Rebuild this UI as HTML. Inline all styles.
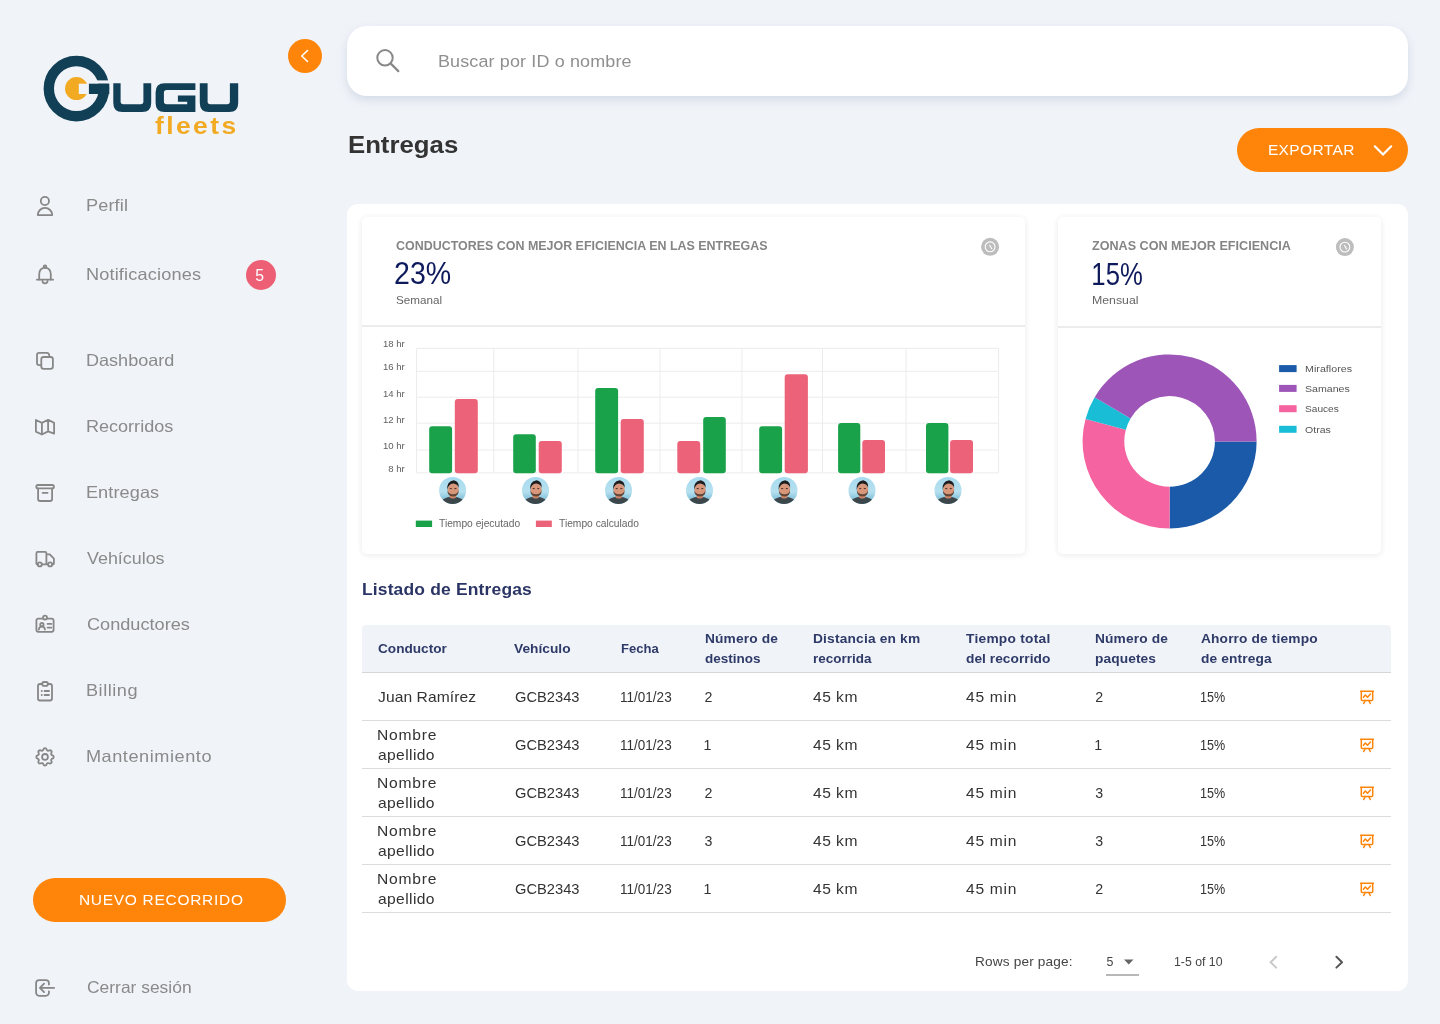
<!DOCTYPE html>
<html lang="es"><head><meta charset="utf-8"><title>Entregas</title>
<style>
html,body{margin:0;padding:0;}
body{width:1440px;height:1024px;position:relative;overflow:hidden;background:#f0f3f8;font-family:"Liberation Sans",sans-serif;}
.t{position:absolute;white-space:nowrap;}
.b{position:absolute;box-sizing:border-box;}
svg.ov{position:absolute;left:0;top:0;width:1440px;height:1024px;}
.tl{position:absolute;left:0;top:0;width:1440px;height:1024px;will-change:transform;}

</style></head><body>
<div class="b" style="left:288px;top:39px;width:34px;height:34px;border-radius:17px;background:#ff850a;"></div>
<div class="b" style="left:347px;top:26px;width:1061px;height:70px;border-radius:20px;background:#fff;box-shadow:0 4px 8px rgba(160,175,200,0.35);"></div>
<div class="b" style="left:1237px;top:128px;width:171px;height:44px;border-radius:22px;background:#ff850a;"></div>
<div class="b" style="left:33px;top:878px;width:253px;height:44px;border-radius:22px;background:#ff850a;"></div>
<div class="b" style="left:246px;top:260px;width:30px;height:30px;border-radius:15px;background:#ec5f75;"></div>
<div class="b" style="left:347px;top:204px;width:1061px;height:787px;border-radius:11px;background:#fff;"></div>
<div class="b" style="left:361.5px;top:216.7px;width:663.5px;height:337.3px;border-radius:5px;background:#fff;box-shadow:0 1px 6px rgba(0,0,0,0.09);"></div>
<div class="b" style="left:1057.7px;top:216.7px;width:323.3px;height:337.3px;border-radius:5px;background:#fff;box-shadow:0 1px 6px rgba(0,0,0,0.09);"></div>
<div class="b" style="left:361.5px;top:325px;width:663.5px;height:2px;background:#ececec;"></div>
<div class="b" style="left:1057.7px;top:325.5px;width:323.3px;height:2px;background:#ececec;"></div>
<div class="b" style="left:362px;top:625px;width:1028.6px;height:48px;border-radius:4px 4px 0 0;background:#f0f3f8;border-bottom:1px solid #d4d6da;"></div>
<div class="b" style="left:362px;top:720px;width:1028.6px;height:1px;background:#dcdcdc;"></div>
<div class="b" style="left:362px;top:768px;width:1028.6px;height:1px;background:#dcdcdc;"></div>
<div class="b" style="left:362px;top:816px;width:1028.6px;height:1px;background:#dcdcdc;"></div>
<div class="b" style="left:362px;top:864px;width:1028.6px;height:1px;background:#dcdcdc;"></div>
<div class="b" style="left:362px;top:912px;width:1028.6px;height:1px;background:#dcdcdc;"></div>
<div class="b" style="left:1106.4px;top:973.5px;width:32.2px;height:2px;background:#b8b8b8;"></div>

<svg class="ov" width="1440" height="1024" viewBox="0 0 1440 1024">
<circle cx="76.4" cy="88.6" r="27.6" fill="none" stroke="#113f56" stroke-width="10.4"/>
<rect x="94" y="80.4" width="18" height="3.3" fill="#f0f3f8"/>
<rect x="88.7" y="83.7" width="20.6" height="10.3" fill="#113f56"/>
<circle cx="76.5" cy="88.6" r="11.5" fill="#f2aa22"/>
<rect x="78.8" y="83.7" width="9.9" height="10.3" fill="#f0f3f8"/>
<path fill="#113f56" d="M113.3 83.3 H120.6 V101.5 Q120.6 104.2 123.3 104.2 H140.7 Q143.4 104.2 143.4 101.5 V83.3 H151.2 V102.9 Q151.2 111.9 142.2 111.9 H122.3 Q113.3 111.9 113.3 102.9 Z"/>
<path fill="#113f56" d="M195.4 83.3 V90.1 H166.6 Q163.9 90.1 163.9 92.8 V101.5 Q163.9 104.2 166.6 104.2 H187.2 V101.7 H177.9 V95.4 H195.4 V111.9 H164.6 Q155.6 111.9 155.6 102.9 V92.3 Q155.6 83.3 164.6 83.3 Z"/>
<path fill="#113f56" d="M199.8 83.3 H207.6 V101.5 Q207.6 104.2 210.3 104.2 H227.2 Q229.9 104.2 229.9 101.5 V83.3 H238.2 V102.9 Q238.2 111.9 229.2 111.9 H208.8 Q199.8 111.9 199.8 102.9 Z"/>
<path d="M307.5 50.5 L301.8 56 L307.5 61.5" fill="none" stroke="#fff" stroke-width="1.6" stroke-linecap="round" stroke-linejoin="round"/>
<circle cx="385" cy="57.8" r="7.7" fill="none" stroke="#888" stroke-width="2"/>
<path d="M390.6 63.4 L398.3 71.1" stroke="#888" stroke-width="2.2" stroke-linecap="round"/>
<path d="M1374.8 146.3 L1383 154.6 L1391.2 146.3" fill="none" stroke="#fff" stroke-width="2.2" stroke-linecap="round" stroke-linejoin="round"/>
<g fill="none" stroke="#878787" stroke-width="1.8" stroke-linecap="round" stroke-linejoin="round">
<circle cx="44.9" cy="201" r="4.1"/>
<path d="M37.8 215.1 A7.2 7.2 0 0 1 52.2 215.1 Z"/>
<path d="M39.2 279.6 V274.2 Q39.2 268.2 45 267.6 Q50.8 268.2 50.8 274.2 V279.6"/>
<path d="M36.9 279.7 H53.1"/>
<circle cx="45" cy="266.6" r="1.3"/>
<path d="M42.4 280.8 A2.6 2.6 0 0 0 47.6 280.8"/>
<path d="M49.2 356.4 V355 A2.1 2.1 0 0 0 47.1 352.9 H39.1 A2.1 2.1 0 0 0 37 355 V363 A2.1 2.1 0 0 0 39.1 365.1 H40.6"/>
<rect x="41.3" y="357" width="11.6" height="11.8" rx="2.3"/>
<path d="M35.9 420 L41.9 422.9 L48.1 419.8 L54.1 422.9 V433.6 L48.1 431.4 L41.9 434.5 L35.9 431.6 Z M41.9 422.9 V434.5 M48.1 419.8 V431.4"/>
<rect x="36.3" y="485" width="17.6" height="3.4" rx="1.7"/>
<path d="M38.1 488.6 V499 A2 2 0 0 0 40.1 501 H50.1 A2 2 0 0 0 52.1 499 V488.6"/>
<path d="M42.6 492.8 H47.6"/>
<path d="M37.8 564.3 H37.3 A0.9 0.9 0 0 1 36.4 563.4 V553.2 A1.4 1.4 0 0 1 37.8 551.8 H45 A1.4 1.4 0 0 1 46.4 553.2 V564.3 M41.8 564.3 H48.1 M52.1 564.3 H53 A0.9 0.9 0 0 0 53.9 563.4 V558.6 L49.8 554.4 H46.4"/>
<circle cx="39.8" cy="564.4" r="2"/>
<circle cx="50.1" cy="564.4" r="2"/>
<path d="M42.6 618.6 H38.4 A2 2 0 0 0 36.4 620.6 V629.8 A2 2 0 0 0 38.4 631.8 H51.6 A2 2 0 0 0 53.6 629.8 V620.6 A2 2 0 0 0 51.6 618.6 H47.3"/>
<circle cx="45" cy="617.6" r="2"/>
<circle cx="41.9" cy="624.6" r="1.7"/>
<path d="M38.9 629.6 A3 3 0 0 1 44.9 629.6"/>
<path d="M47.6 623.9 H51.4 M47.6 627.6 H51.4"/>
<path d="M42.1 684 H40 A2 2 0 0 0 38 686 V698.5 A2 2 0 0 0 40 700.5 H50 A2 2 0 0 0 52 698.5 V686 A2 2 0 0 0 50 684 H48"/>
<rect x="42.2" y="682" width="5.7" height="3.8" rx="1.9"/>
<path d="M41.7 691 H41.8 M44.6 691 H49 M41.7 695 H41.8 M44.6 695 H49"/>
<path d="M48.9 984.5 V983.1 A3 3 0 0 0 45.9 980.1 H39.1 A3 3 0 0 0 36.1 983.1 V992.8 A3 3 0 0 0 39.1 995.8 H45.9 A3 3 0 0 0 48.9 992.8 V991.3"/>
<path d="M54.1 987.9 H40.2 M44.1 983.7 L39.9 987.9 L44.1 992.1"/>
</g>
<g transform="translate(33.4 745.3) scale(0.967)" fill="none" stroke="#878787" stroke-width="1.86" stroke-linecap="round" stroke-linejoin="round"><path d="M10.325 4.317c.426 -1.756 2.924 -1.756 3.35 0a1.724 1.724 0 0 0 2.573 1.066c1.543 -.94 3.31 .826 2.37 2.37a1.724 1.724 0 0 0 1.065 2.572c1.756 .426 1.756 2.924 0 3.35a1.724 1.724 0 0 0 -1.066 2.573c.94 1.543 -.826 3.31 -2.37 2.37a1.724 1.724 0 0 0 -2.572 1.065c-.426 1.756 -2.924 1.756 -3.35 0a1.724 1.724 0 0 0 -2.573 -1.066c-1.543 .94 -3.31 -.826 -2.37 -2.37a1.724 1.724 0 0 0 -1.065 -2.572c-1.756 -.426 -1.756 -2.924 0 -3.35a1.724 1.724 0 0 0 1.066 -2.573c-.94 -1.543 .826 -3.31 2.37 -2.37c1 .608 2.296 .07 2.572 -1.065z"/><circle cx="12" cy="12" r="3"/></g>
<line x1="416.6" y1="348.3" x2="998.6" y2="348.3" stroke="#ececec" stroke-width="1"/>
<line x1="416.6" y1="371.25" x2="998.6" y2="371.25" stroke="#ececec" stroke-width="1"/>
<line x1="416.6" y1="397.2" x2="998.6" y2="397.2" stroke="#ececec" stroke-width="1"/>
<line x1="416.6" y1="423.2" x2="998.6" y2="423.2" stroke="#ececec" stroke-width="1"/>
<line x1="416.6" y1="450" x2="998.6" y2="450" stroke="#ececec" stroke-width="1"/>
<line x1="416.6" y1="472.9" x2="998.6" y2="472.9" stroke="#ececec" stroke-width="1"/>
<line x1="416.6" y1="348.3" x2="416.6" y2="472.9" stroke="#ececec" stroke-width="1"/>
<line x1="493.8" y1="348.3" x2="493.8" y2="472.9" stroke="#ececec" stroke-width="1"/>
<line x1="578" y1="348.3" x2="578" y2="472.9" stroke="#ececec" stroke-width="1"/>
<line x1="660.1" y1="348.3" x2="660.1" y2="472.9" stroke="#ececec" stroke-width="1"/>
<line x1="741.9" y1="348.3" x2="741.9" y2="472.9" stroke="#ececec" stroke-width="1"/>
<line x1="822.5" y1="348.3" x2="822.5" y2="472.9" stroke="#ececec" stroke-width="1"/>
<line x1="906.1" y1="348.3" x2="906.1" y2="472.9" stroke="#ececec" stroke-width="1"/>
<line x1="998.6" y1="348.3" x2="998.6" y2="472.9" stroke="#ececec" stroke-width="1"/>
<rect x="429.2" y="426.3" width="22.9" height="47.0" rx="3" fill="#1aa24b"/>
<rect x="454.8" y="399.1" width="23.0" height="74.2" rx="3" fill="#ec6278"/>
<rect x="513.2" y="434.2" width="22.6" height="39.1" rx="3" fill="#1aa24b"/>
<rect x="538.7" y="441" width="23.1" height="32.3" rx="3" fill="#ec6278"/>
<rect x="595.2" y="388" width="22.9" height="85.3" rx="3" fill="#1aa24b"/>
<rect x="620.7" y="419.1" width="23.1" height="54.2" rx="3" fill="#ec6278"/>
<rect x="677.3" y="441" width="22.9" height="32.3" rx="3" fill="#ec6278"/>
<rect x="703.2" y="417.1" width="22.6" height="56.2" rx="3" fill="#1aa24b"/>
<rect x="759.2" y="426.3" width="22.9" height="47.0" rx="3" fill="#1aa24b"/>
<rect x="784.7" y="374.3" width="23.2" height="99.0" rx="3" fill="#ec6278"/>
<rect x="838.1" y="422.9" width="22.2" height="50.4" rx="3" fill="#1aa24b"/>
<rect x="862.3" y="440" width="22.7" height="33.3" rx="3" fill="#ec6278"/>
<rect x="926" y="422.9" width="22.4" height="50.4" rx="3" fill="#1aa24b"/>
<rect x="950.1" y="440" width="22.9" height="33.3" rx="3" fill="#ec6278"/>
<rect x="415.8" y="520.6" width="16.3" height="6.4" fill="#1aa24b"/>
<rect x="535.9" y="520.6" width="15.9" height="6.4" fill="#ec6278"/>
<defs><linearGradient id="sky" x1="0" y1="0" x2="0" y2="1"><stop offset="0" stop-color="#a6dbef"/><stop offset="0.55" stop-color="#b6e0ef"/><stop offset="0.75" stop-color="#8fc9e0"/><stop offset="1" stop-color="#9ccfe4"/></linearGradient></defs>
<clipPath id="av452"><circle cx="452.6" cy="490.4" r="13.5"/></clipPath>
<g clip-path="url(#av452)"><rect x="438.6" y="476.4" width="28" height="28" fill="url(#sky)"/><ellipse cx="452.6" cy="504.9" rx="13" ry="8.2" fill="#3c474c"/><rect x="449.6" y="492.9" width="6.5" height="5.5" rx="2" fill="#c98466"/><ellipse cx="453.20000000000005" cy="489.79999999999995" rx="5.6" ry="6.6" fill="#d8977a"/><path d="M447.40000000000003 489.9 Q447.1 495.9 453.20000000000005 496.4 Q459.1 495.9 458.6 489.9 Q457.6 494.2 453.20000000000005 494.2 Q448.6 494.2 447.40000000000003 489.9 Z" fill="#3a2a22" opacity="0.75"/><path d="M447.20000000000005 489.9 Q446.40000000000003 481.4 453.8 480.2 Q459.40000000000003 481.4 458.70000000000005 487.9 Q457.6 483.9 453.20000000000005 483.59999999999997 Q448.6 483.9 447.20000000000005 489.9 Z" fill="#1f1d1e"/><path d="M449.8 488.59999999999997 H451.8 M454.40000000000003 488.59999999999997 H456.40000000000003" stroke="#3a2520" stroke-width="0.9"/></g>
<clipPath id="av535"><circle cx="535.5" cy="490.4" r="13.5"/></clipPath>
<g clip-path="url(#av535)"><rect x="521.5" y="476.4" width="28" height="28" fill="url(#sky)"/><ellipse cx="535.5" cy="504.9" rx="13" ry="8.2" fill="#3c474c"/><rect x="532.5" y="492.9" width="6.5" height="5.5" rx="2" fill="#c98466"/><ellipse cx="536.1" cy="489.79999999999995" rx="5.6" ry="6.6" fill="#d8977a"/><path d="M530.3 489.9 Q530.0 495.9 536.1 496.4 Q542.0 495.9 541.5 489.9 Q540.5 494.2 536.1 494.2 Q531.5 494.2 530.3 489.9 Z" fill="#3a2a22" opacity="0.75"/><path d="M530.1 489.9 Q529.3 481.4 536.7 480.2 Q542.3 481.4 541.6 487.9 Q540.5 483.9 536.1 483.59999999999997 Q531.5 483.9 530.1 489.9 Z" fill="#1f1d1e"/><path d="M532.7 488.59999999999997 H534.7 M537.3 488.59999999999997 H539.3" stroke="#3a2520" stroke-width="0.9"/></g>
<clipPath id="av618"><circle cx="618.5" cy="490.4" r="13.5"/></clipPath>
<g clip-path="url(#av618)"><rect x="604.5" y="476.4" width="28" height="28" fill="url(#sky)"/><ellipse cx="618.5" cy="504.9" rx="13" ry="8.2" fill="#3c474c"/><rect x="615.5" y="492.9" width="6.5" height="5.5" rx="2" fill="#c98466"/><ellipse cx="619.1" cy="489.79999999999995" rx="5.6" ry="6.6" fill="#d8977a"/><path d="M613.3 489.9 Q613.0 495.9 619.1 496.4 Q625.0 495.9 624.5 489.9 Q623.5 494.2 619.1 494.2 Q614.5 494.2 613.3 489.9 Z" fill="#3a2a22" opacity="0.75"/><path d="M613.1 489.9 Q612.3 481.4 619.7 480.2 Q625.3 481.4 624.6 487.9 Q623.5 483.9 619.1 483.59999999999997 Q614.5 483.9 613.1 489.9 Z" fill="#1f1d1e"/><path d="M615.7 488.59999999999997 H617.7 M620.3 488.59999999999997 H622.3" stroke="#3a2520" stroke-width="0.9"/></g>
<clipPath id="av699"><circle cx="699.5" cy="490.4" r="13.5"/></clipPath>
<g clip-path="url(#av699)"><rect x="685.5" y="476.4" width="28" height="28" fill="url(#sky)"/><ellipse cx="699.5" cy="504.9" rx="13" ry="8.2" fill="#3c474c"/><rect x="696.5" y="492.9" width="6.5" height="5.5" rx="2" fill="#c98466"/><ellipse cx="700.1" cy="489.79999999999995" rx="5.6" ry="6.6" fill="#d8977a"/><path d="M694.3 489.9 Q694.0 495.9 700.1 496.4 Q706.0 495.9 705.5 489.9 Q704.5 494.2 700.1 494.2 Q695.5 494.2 694.3 489.9 Z" fill="#3a2a22" opacity="0.75"/><path d="M694.1 489.9 Q693.3 481.4 700.7 480.2 Q706.3 481.4 705.6 487.9 Q704.5 483.9 700.1 483.59999999999997 Q695.5 483.9 694.1 489.9 Z" fill="#1f1d1e"/><path d="M696.7 488.59999999999997 H698.7 M701.3 488.59999999999997 H703.3" stroke="#3a2520" stroke-width="0.9"/></g>
<clipPath id="av784"><circle cx="784" cy="490.4" r="13.5"/></clipPath>
<g clip-path="url(#av784)"><rect x="770" y="476.4" width="28" height="28" fill="url(#sky)"/><ellipse cx="784" cy="504.9" rx="13" ry="8.2" fill="#3c474c"/><rect x="781" y="492.9" width="6.5" height="5.5" rx="2" fill="#c98466"/><ellipse cx="784.6" cy="489.79999999999995" rx="5.6" ry="6.6" fill="#d8977a"/><path d="M778.8 489.9 Q778.5 495.9 784.6 496.4 Q790.5 495.9 790 489.9 Q789 494.2 784.6 494.2 Q780 494.2 778.8 489.9 Z" fill="#3a2a22" opacity="0.75"/><path d="M778.6 489.9 Q777.8 481.4 785.2 480.2 Q790.8 481.4 790.1 487.9 Q789 483.9 784.6 483.59999999999997 Q780 483.9 778.6 489.9 Z" fill="#1f1d1e"/><path d="M781.2 488.59999999999997 H783.2 M785.8 488.59999999999997 H787.8" stroke="#3a2520" stroke-width="0.9"/></g>
<clipPath id="av862"><circle cx="862" cy="490.4" r="13.5"/></clipPath>
<g clip-path="url(#av862)"><rect x="848" y="476.4" width="28" height="28" fill="url(#sky)"/><ellipse cx="862" cy="504.9" rx="13" ry="8.2" fill="#3c474c"/><rect x="859" y="492.9" width="6.5" height="5.5" rx="2" fill="#c98466"/><ellipse cx="862.6" cy="489.79999999999995" rx="5.6" ry="6.6" fill="#d8977a"/><path d="M856.8 489.9 Q856.5 495.9 862.6 496.4 Q868.5 495.9 868 489.9 Q867 494.2 862.6 494.2 Q858 494.2 856.8 489.9 Z" fill="#3a2a22" opacity="0.75"/><path d="M856.6 489.9 Q855.8 481.4 863.2 480.2 Q868.8 481.4 868.1 487.9 Q867 483.9 862.6 483.59999999999997 Q858 483.9 856.6 489.9 Z" fill="#1f1d1e"/><path d="M859.2 488.59999999999997 H861.2 M863.8 488.59999999999997 H865.8" stroke="#3a2520" stroke-width="0.9"/></g>
<clipPath id="av948"><circle cx="948" cy="490.4" r="13.5"/></clipPath>
<g clip-path="url(#av948)"><rect x="934" y="476.4" width="28" height="28" fill="url(#sky)"/><ellipse cx="948" cy="504.9" rx="13" ry="8.2" fill="#3c474c"/><rect x="945" y="492.9" width="6.5" height="5.5" rx="2" fill="#c98466"/><ellipse cx="948.6" cy="489.79999999999995" rx="5.6" ry="6.6" fill="#d8977a"/><path d="M942.8 489.9 Q942.5 495.9 948.6 496.4 Q954.5 495.9 954 489.9 Q953 494.2 948.6 494.2 Q944 494.2 942.8 489.9 Z" fill="#3a2a22" opacity="0.75"/><path d="M942.6 489.9 Q941.8 481.4 949.2 480.2 Q954.8 481.4 954.1 487.9 Q953 483.9 948.6 483.59999999999997 Q944 483.9 942.6 489.9 Z" fill="#1f1d1e"/><path d="M945.2 488.59999999999997 H947.2 M949.8 488.59999999999997 H951.8" stroke="#3a2520" stroke-width="0.9"/></g>
<circle cx="990.1" cy="246.8" r="9" fill="#bdbdbd"/>
<circle cx="990.1" cy="246.8" r="4.9" fill="none" stroke="#fff" stroke-width="1.1"/>
<path d="M989.7 245.20000000000002 L991.8000000000001 248.70000000000002" fill="none" stroke="#fff" stroke-width="1.1" stroke-linecap="round"/>
<circle cx="1344.9" cy="247.1" r="9" fill="#bdbdbd"/>
<circle cx="1344.9" cy="247.1" r="4.9" fill="none" stroke="#fff" stroke-width="1.1"/>
<path d="M1344.5 245.5 L1346.6000000000001 249.0" fill="none" stroke="#fff" stroke-width="1.1" stroke-linecap="round"/>
<path d="M1256.60 441.40 A87 87 0 0 1 1169.60 528.40 L1169.60 486.70 A45.3 45.3 0 0 0 1214.90 441.40 Z" fill="#1a5aa9"/>
<path d="M1169.60 528.40 A87 87 0 0 1 1085.56 418.88 L1125.84 429.68 A45.3 45.3 0 0 0 1169.60 486.70 Z" fill="#f564a0"/>
<path d="M1085.56 418.88 A87 87 0 0 1 1094.64 397.24 L1130.57 418.41 A45.3 45.3 0 0 0 1125.84 429.68 Z" fill="#19bed6"/>
<path d="M1094.64 397.24 A87 87 0 0 1 1256.60 441.40 L1214.90 441.40 A45.3 45.3 0 0 0 1130.57 418.41 Z" fill="#9d55b8"/>
<rect x="1279.1" y="365.1" width="17.5" height="7" fill="#1a5aa9"/>
<rect x="1279.1" y="384.9" width="17.5" height="7" fill="#9d55b8"/>
<rect x="1279.1" y="405.2" width="17.5" height="7" fill="#f564a0"/>
<rect x="1279.1" y="425.8" width="17.5" height="7" fill="#19bed6"/>
<g transform="translate(0 0)" fill="none" stroke="#ff8508" stroke-width="1.5" stroke-linecap="round" stroke-linejoin="round"><path d="M1360.6 691.2 H1373.4"/><path d="M1361.3 691.5 V699.4 A1 1 0 0 0 1362.3 700.4 H1371.7 A1 1 0 0 0 1372.7 699.4 V691.5"/><path d="M1365.2 700.6 L1363.7 703.5 M1368.8 700.6 L1370.3 703.5"/><path d="M1363.4 697.3 L1365.4 695 L1367.5 697.3 L1370.5 694.1"/></g>
<g transform="translate(0 48)" fill="none" stroke="#ff8508" stroke-width="1.5" stroke-linecap="round" stroke-linejoin="round"><path d="M1360.6 691.2 H1373.4"/><path d="M1361.3 691.5 V699.4 A1 1 0 0 0 1362.3 700.4 H1371.7 A1 1 0 0 0 1372.7 699.4 V691.5"/><path d="M1365.2 700.6 L1363.7 703.5 M1368.8 700.6 L1370.3 703.5"/><path d="M1363.4 697.3 L1365.4 695 L1367.5 697.3 L1370.5 694.1"/></g>
<g transform="translate(0 96)" fill="none" stroke="#ff8508" stroke-width="1.5" stroke-linecap="round" stroke-linejoin="round"><path d="M1360.6 691.2 H1373.4"/><path d="M1361.3 691.5 V699.4 A1 1 0 0 0 1362.3 700.4 H1371.7 A1 1 0 0 0 1372.7 699.4 V691.5"/><path d="M1365.2 700.6 L1363.7 703.5 M1368.8 700.6 L1370.3 703.5"/><path d="M1363.4 697.3 L1365.4 695 L1367.5 697.3 L1370.5 694.1"/></g>
<g transform="translate(0 144)" fill="none" stroke="#ff8508" stroke-width="1.5" stroke-linecap="round" stroke-linejoin="round"><path d="M1360.6 691.2 H1373.4"/><path d="M1361.3 691.5 V699.4 A1 1 0 0 0 1362.3 700.4 H1371.7 A1 1 0 0 0 1372.7 699.4 V691.5"/><path d="M1365.2 700.6 L1363.7 703.5 M1368.8 700.6 L1370.3 703.5"/><path d="M1363.4 697.3 L1365.4 695 L1367.5 697.3 L1370.5 694.1"/></g>
<g transform="translate(0 192)" fill="none" stroke="#ff8508" stroke-width="1.5" stroke-linecap="round" stroke-linejoin="round"><path d="M1360.6 691.2 H1373.4"/><path d="M1361.3 691.5 V699.4 A1 1 0 0 0 1362.3 700.4 H1371.7 A1 1 0 0 0 1372.7 699.4 V691.5"/><path d="M1365.2 700.6 L1363.7 703.5 M1368.8 700.6 L1370.3 703.5"/><path d="M1363.4 697.3 L1365.4 695 L1367.5 697.3 L1370.5 694.1"/></g>
<path d="M1124 959.5 H1133.5 L1128.75 964.5 Z" fill="#666"/>
<path d="M1276.2 956.8 L1270.6 962.2 L1276.2 967.6" fill="none" stroke="#c9c9c9" stroke-width="2" stroke-linecap="round" stroke-linejoin="round"/>
<path d="M1336.4 956.8 L1342 962.2 L1336.4 967.6" fill="none" stroke="#555" stroke-width="2" stroke-linecap="round" stroke-linejoin="round"/>
</svg>
<div class="tl"><div class="t" id="t0" style="top:197.00px;font-size:16.50px;line-height:16.50px;color:#8a8a8a;left:86.30px;letter-spacing:0.142px;transform:scaleX(1.1000);transform-origin:1.00px 0;">Perfil</div>
<div class="t" id="t1" style="top:266.00px;font-size:16.50px;line-height:16.50px;color:#8a8a8a;left:86.30px;letter-spacing:0.153px;transform:scaleX(1.1000);transform-origin:1.00px 0;">Notificaciones</div>
<div class="t" id="t2" style="top:352.00px;font-size:16.50px;line-height:16.50px;color:#8a8a8a;left:86.10px;transform:scaleX(1.0963);transform-origin:1.00px 0;">Dashboard</div>
<div class="t" id="t3" style="top:418.00px;font-size:16.50px;line-height:16.50px;color:#8a8a8a;left:86.10px;transform:scaleX(1.0952);transform-origin:1.00px 0;">Recorridos</div>
<div class="t" id="t4" style="top:484.00px;font-size:16.50px;line-height:16.50px;color:#8a8a8a;left:86.10px;letter-spacing:0.082px;transform:scaleX(1.1000);transform-origin:1.00px 0;">Entregas</div>
<div class="t" id="t5" style="top:550.00px;font-size:16.50px;line-height:16.50px;color:#8a8a8a;left:87.10px;transform:scaleX(1.0841);transform-origin:0.00px 0;">Vehículos</div>
<div class="t" id="t6" style="top:616.00px;font-size:16.50px;line-height:16.50px;color:#8a8a8a;left:87.10px;transform:scaleX(1.0996);transform-origin:0.00px 0;">Conductores</div>
<div class="t" id="t7" style="top:682.00px;font-size:16.50px;line-height:16.50px;color:#8a8a8a;left:86.10px;letter-spacing:0.496px;transform:scaleX(1.1000);transform-origin:1.00px 0;">Billing</div>
<div class="t" id="t8" style="top:748.00px;font-size:16.50px;line-height:16.50px;color:#8a8a8a;left:86.10px;letter-spacing:0.496px;transform:scaleX(1.1000);transform-origin:1.00px 0;">Mantenimiento</div>
<div class="t" id="t9" style="top:979.00px;font-size:16.50px;line-height:16.50px;color:#8a8a8a;left:86.70px;transform:scaleX(1.0561);transform-origin:0.00px 0;">Cerrar sesión</div>
<div class="t" id="t10" style="top:893.00px;font-size:14.10px;line-height:14.10px;color:#fff;left:78.75px;letter-spacing:0.641px;transform:scaleX(1.1000);transform-origin:1.00px 0;">NUEVO RECORRIDO</div>
<div class="t" id="t11" style="top:268.00px;font-size:15.80px;line-height:15.80px;color:#fff;left:255.30px;">5</div>
<div class="t" id="t12" style="top:114.00px;font-size:24.00px;line-height:24.00px;color:#f2aa22;font-weight:700;left:154.60px;letter-spacing:2.203px;transform:scaleX(1.1000);transform-origin:0.00px 0;">fleets</div>
<div class="t" id="t13" style="top:53.00px;font-size:16.35px;line-height:16.35px;color:#8f8f8f;left:437.50px;letter-spacing:0.123px;transform:scaleX(1.1000);transform-origin:1.00px 0;">Buscar por ID o nombre</div>
<div class="t" id="t14" style="top:133.00px;font-size:24.20px;line-height:24.20px;color:#333;font-weight:700;left:347.75px;transform:scaleX(1.0656);transform-origin:1.00px 0;">Entregas</div>
<div class="t" id="t15" style="top:143.00px;font-size:14.10px;line-height:14.10px;color:#fff;left:1267.90px;letter-spacing:0.343px;transform:scaleX(1.1000);transform-origin:1.00px 0;">EXPORTAR</div>
<div class="t" id="t16" style="top:240.00px;font-size:12.50px;line-height:12.50px;color:#858585;font-weight:700;left:396.40px;transform:scaleX(0.9960);transform-origin:0.00px 0;">CONDUCTORES CON MEJOR EFICIENCIA EN LAS ENTREGAS</div>
<div class="t" id="t17" style="top:258.00px;font-size:31.00px;line-height:31.00px;color:#0e1a5c;left:394.00px;transform:scaleX(0.9209);transform-origin:1.00px 0;">23%</div>
<div class="t" id="t18" style="top:295.00px;font-size:11.30px;line-height:11.30px;color:#666;left:396.40px;transform:scaleX(1.0323);transform-origin:0.00px 0;">Semanal</div>
<div class="t" id="t19" style="top:339.00px;font-size:9.60px;line-height:9.60px;color:#5f5f5f;right:1035.2px;">18 hr</div>
<div class="t" id="t20" style="top:362.00px;font-size:9.60px;line-height:9.60px;color:#5f5f5f;right:1035.2px;">16 hr</div>
<div class="t" id="t21" style="top:389.00px;font-size:9.60px;line-height:9.60px;color:#5f5f5f;right:1035.2px;">14 hr</div>
<div class="t" id="t22" style="top:415.00px;font-size:9.60px;line-height:9.60px;color:#5f5f5f;right:1035.2px;">12 hr</div>
<div class="t" id="t23" style="top:441.00px;font-size:9.60px;line-height:9.60px;color:#5f5f5f;right:1035.2px;">10 hr</div>
<div class="t" id="t24" style="top:464.00px;font-size:9.60px;line-height:9.60px;color:#5f5f5f;right:1035.2px;">8 hr</div>
<div class="t" id="t25" style="top:519.00px;font-size:10.00px;line-height:10.00px;color:#666;left:439.10px;transform:scaleX(1.0256);transform-origin:0.00px 0;">Tiempo ejecutado</div>
<div class="t" id="t26" style="top:519.00px;font-size:10.00px;line-height:10.00px;color:#666;left:558.80px;transform:scaleX(1.0250);transform-origin:0.00px 0;">Tiempo calculado</div>
<div class="t" id="t27" style="top:240.00px;font-size:12.50px;line-height:12.50px;color:#858585;font-weight:700;left:1092.20px;transform:scaleX(1.0081);transform-origin:0.00px 0;">ZONAS CON MEJOR EFICIENCIA</div>
<div class="t" id="t28" style="top:259.00px;font-size:31.00px;line-height:31.00px;color:#0e1a5c;left:1090.70px;transform:scaleX(0.8288);transform-origin:2.00px 0;">15%</div>
<div class="t" id="t29" style="top:295.00px;font-size:11.30px;line-height:11.30px;color:#666;left:1092.20px;transform:scaleX(1.0903);transform-origin:0.00px 0;">Mensual</div>
<div class="t" id="t30" style="top:364.00px;font-size:9.70px;line-height:9.70px;color:#555;left:1304.60px;letter-spacing:0.035px;transform:scaleX(1.1000);transform-origin:0.00px 0;">Miraflores</div>
<div class="t" id="t31" style="top:384.00px;font-size:9.70px;line-height:9.70px;color:#555;left:1304.60px;transform:scaleX(1.0954);transform-origin:0.00px 0;">Samanes</div>
<div class="t" id="t32" style="top:404.00px;font-size:9.70px;line-height:9.70px;color:#555;left:1304.60px;transform:scaleX(1.0472);transform-origin:0.00px 0;">Sauces</div>
<div class="t" id="t33" style="top:425.00px;font-size:9.70px;line-height:9.70px;color:#555;left:1304.60px;transform:scaleX(1.0906);transform-origin:0.00px 0;">Otras</div>
<div class="t" id="t34" style="top:582.00px;font-size:15.90px;line-height:15.90px;color:#2b3565;font-weight:700;left:361.60px;letter-spacing:0.144px;transform:scaleX(1.1000);transform-origin:1.00px 0;">Listado de Entregas</div>
<div class="t" id="t35" style="top:643.00px;font-size:12.50px;line-height:12.50px;color:#2e3a68;font-weight:700;left:378.20px;transform:scaleX(1.0897);transform-origin:0.00px 0;">Conductor</div>
<div class="t" id="t36" style="top:643.00px;font-size:12.50px;line-height:12.50px;color:#2e3a68;font-weight:700;left:514.30px;letter-spacing:0.007px;transform:scaleX(1.1000);transform-origin:0.00px 0;">Vehículo</div>
<div class="t" id="t37" style="top:643.00px;font-size:12.50px;line-height:12.50px;color:#2e3a68;font-weight:700;left:620.50px;transform:scaleX(1.0424);transform-origin:0.00px 0;">Fecha</div>
<div class="t" id="t38" style="top:633.00px;font-size:12.50px;line-height:12.50px;color:#2e3a68;font-weight:700;left:704.50px;letter-spacing:0.128px;transform:scaleX(1.1000);transform-origin:0.00px 0;">Número de</div>
<div class="t" id="t39" style="top:653.00px;font-size:12.50px;line-height:12.50px;color:#2e3a68;font-weight:700;left:704.50px;transform:scaleX(1.0788);transform-origin:0.00px 0;">destinos</div>
<div class="t" id="t40" style="top:633.00px;font-size:12.50px;line-height:12.50px;color:#2e3a68;font-weight:700;left:812.50px;letter-spacing:0.158px;transform:scaleX(1.1000);transform-origin:0.00px 0;">Distancia en km</div>
<div class="t" id="t41" style="top:653.00px;font-size:12.50px;line-height:12.50px;color:#2e3a68;font-weight:700;left:812.50px;transform:scaleX(1.0771);transform-origin:0.00px 0;">recorrida</div>
<div class="t" id="t42" style="top:633.00px;font-size:12.50px;line-height:12.50px;color:#2e3a68;font-weight:700;left:966.25px;letter-spacing:0.230px;transform:scaleX(1.1000);transform-origin:0.00px 0;">Tiempo total</div>
<div class="t" id="t43" style="top:653.00px;font-size:12.50px;line-height:12.50px;color:#2e3a68;font-weight:700;left:966.25px;letter-spacing:0.019px;transform:scaleX(1.1000);transform-origin:0.00px 0;">del recorrido</div>
<div class="t" id="t44" style="top:633.00px;font-size:12.50px;line-height:12.50px;color:#2e3a68;font-weight:700;left:1095.30px;letter-spacing:0.117px;transform:scaleX(1.1000);transform-origin:0.00px 0;">Número de</div>
<div class="t" id="t45" style="top:653.00px;font-size:12.50px;line-height:12.50px;color:#2e3a68;font-weight:700;left:1095.30px;letter-spacing:0.076px;transform:scaleX(1.1000);transform-origin:0.00px 0;">paquetes</div>
<div class="t" id="t46" style="top:633.00px;font-size:12.50px;line-height:12.50px;color:#2e3a68;font-weight:700;left:1201.00px;letter-spacing:0.122px;transform:scaleX(1.1000);transform-origin:0.00px 0;">Ahorro de tiempo</div>
<div class="t" id="t47" style="top:653.00px;font-size:12.50px;line-height:12.50px;color:#2e3a68;font-weight:700;left:1201.00px;letter-spacing:0.112px;transform:scaleX(1.1000);transform-origin:0.00px 0;">de entrega</div>
<div class="t" id="t48" style="top:690.00px;font-size:14.20px;line-height:14.20px;color:#333;left:378.20px;letter-spacing:0.079px;transform:scaleX(1.1000);transform-origin:0.00px 0;">Juan Ramírez</div>
<div class="t" id="t49" style="top:690.00px;font-size:14.20px;line-height:14.20px;color:#333;left:514.50px;transform:scaleX(1.0350);transform-origin:0.00px 0;">GCB2343</div>
<div class="t" id="t50" style="top:690.00px;font-size:14.20px;line-height:14.20px;color:#333;left:619.50px;transform:scaleX(0.9525);transform-origin:1.00px 0;">11/01/23</div>
<div class="t" id="t51" style="top:690.00px;font-size:14.20px;line-height:14.20px;color:#333;left:704.50px;">2</div>
<div class="t" id="t52" style="top:690.00px;font-size:14.20px;line-height:14.20px;color:#333;left:812.50px;letter-spacing:0.432px;transform:scaleX(1.1000);transform-origin:0.00px 0;">45 km</div>
<div class="t" id="t53" style="top:690.00px;font-size:14.20px;line-height:14.20px;color:#333;left:966.25px;letter-spacing:0.643px;transform:scaleX(1.1000);transform-origin:0.00px 0;">45 min</div>
<div class="t" id="t54" style="top:690.00px;font-size:14.20px;line-height:14.20px;color:#333;left:1095.30px;">2</div>
<div class="t" id="t55" style="top:690.00px;font-size:14.20px;line-height:14.20px;color:#333;left:1200.00px;transform:scaleX(0.8855);transform-origin:1.00px 0;">15%</div>
<div class="t" id="t56" style="top:728.00px;font-size:14.20px;line-height:14.20px;color:#333;left:377.40px;letter-spacing:0.741px;transform:scaleX(1.1000);transform-origin:1.00px 0;">Nombre</div>
<div class="t" id="t57" style="top:748.00px;font-size:14.20px;line-height:14.20px;color:#333;left:378.40px;letter-spacing:0.348px;transform:scaleX(1.1000);transform-origin:0.00px 0;">apellido</div>
<div class="t" id="t58" style="top:738.00px;font-size:14.20px;line-height:14.20px;color:#333;left:514.50px;transform:scaleX(1.0350);transform-origin:0.00px 0;">GCB2343</div>
<div class="t" id="t59" style="top:738.00px;font-size:14.20px;line-height:14.20px;color:#333;left:619.50px;transform:scaleX(0.9525);transform-origin:1.00px 0;">11/01/23</div>
<div class="t" id="t60" style="top:738.00px;font-size:14.20px;line-height:14.20px;color:#333;left:703.50px;">1</div>
<div class="t" id="t61" style="top:738.00px;font-size:14.20px;line-height:14.20px;color:#333;left:812.50px;letter-spacing:0.432px;transform:scaleX(1.1000);transform-origin:0.00px 0;">45 km</div>
<div class="t" id="t62" style="top:738.00px;font-size:14.20px;line-height:14.20px;color:#333;left:966.25px;letter-spacing:0.643px;transform:scaleX(1.1000);transform-origin:0.00px 0;">45 min</div>
<div class="t" id="t63" style="top:738.00px;font-size:14.20px;line-height:14.20px;color:#333;left:1094.30px;">1</div>
<div class="t" id="t64" style="top:738.00px;font-size:14.20px;line-height:14.20px;color:#333;left:1200.00px;transform:scaleX(0.8855);transform-origin:1.00px 0;">15%</div>
<div class="t" id="t65" style="top:776.00px;font-size:14.20px;line-height:14.20px;color:#333;left:377.40px;letter-spacing:0.741px;transform:scaleX(1.1000);transform-origin:1.00px 0;">Nombre</div>
<div class="t" id="t66" style="top:796.00px;font-size:14.20px;line-height:14.20px;color:#333;left:378.40px;letter-spacing:0.348px;transform:scaleX(1.1000);transform-origin:0.00px 0;">apellido</div>
<div class="t" id="t67" style="top:786.00px;font-size:14.20px;line-height:14.20px;color:#333;left:514.50px;transform:scaleX(1.0350);transform-origin:0.00px 0;">GCB2343</div>
<div class="t" id="t68" style="top:786.00px;font-size:14.20px;line-height:14.20px;color:#333;left:619.50px;transform:scaleX(0.9525);transform-origin:1.00px 0;">11/01/23</div>
<div class="t" id="t69" style="top:786.00px;font-size:14.20px;line-height:14.20px;color:#333;left:704.50px;">2</div>
<div class="t" id="t70" style="top:786.00px;font-size:14.20px;line-height:14.20px;color:#333;left:812.50px;letter-spacing:0.432px;transform:scaleX(1.1000);transform-origin:0.00px 0;">45 km</div>
<div class="t" id="t71" style="top:786.00px;font-size:14.20px;line-height:14.20px;color:#333;left:966.25px;letter-spacing:0.643px;transform:scaleX(1.1000);transform-origin:0.00px 0;">45 min</div>
<div class="t" id="t72" style="top:786.00px;font-size:14.20px;line-height:14.20px;color:#333;left:1095.30px;">3</div>
<div class="t" id="t73" style="top:786.00px;font-size:14.20px;line-height:14.20px;color:#333;left:1200.00px;transform:scaleX(0.8855);transform-origin:1.00px 0;">15%</div>
<div class="t" id="t74" style="top:824.00px;font-size:14.20px;line-height:14.20px;color:#333;left:377.40px;letter-spacing:0.741px;transform:scaleX(1.1000);transform-origin:1.00px 0;">Nombre</div>
<div class="t" id="t75" style="top:844.00px;font-size:14.20px;line-height:14.20px;color:#333;left:378.40px;letter-spacing:0.348px;transform:scaleX(1.1000);transform-origin:0.00px 0;">apellido</div>
<div class="t" id="t76" style="top:834.00px;font-size:14.20px;line-height:14.20px;color:#333;left:514.50px;transform:scaleX(1.0350);transform-origin:0.00px 0;">GCB2343</div>
<div class="t" id="t77" style="top:834.00px;font-size:14.20px;line-height:14.20px;color:#333;left:619.50px;transform:scaleX(0.9525);transform-origin:1.00px 0;">11/01/23</div>
<div class="t" id="t78" style="top:834.00px;font-size:14.20px;line-height:14.20px;color:#333;left:704.50px;">3</div>
<div class="t" id="t79" style="top:834.00px;font-size:14.20px;line-height:14.20px;color:#333;left:812.50px;letter-spacing:0.432px;transform:scaleX(1.1000);transform-origin:0.00px 0;">45 km</div>
<div class="t" id="t80" style="top:834.00px;font-size:14.20px;line-height:14.20px;color:#333;left:966.25px;letter-spacing:0.643px;transform:scaleX(1.1000);transform-origin:0.00px 0;">45 min</div>
<div class="t" id="t81" style="top:834.00px;font-size:14.20px;line-height:14.20px;color:#333;left:1095.30px;">3</div>
<div class="t" id="t82" style="top:834.00px;font-size:14.20px;line-height:14.20px;color:#333;left:1200.00px;transform:scaleX(0.8855);transform-origin:1.00px 0;">15%</div>
<div class="t" id="t83" style="top:872.00px;font-size:14.20px;line-height:14.20px;color:#333;left:377.40px;letter-spacing:0.741px;transform:scaleX(1.1000);transform-origin:1.00px 0;">Nombre</div>
<div class="t" id="t84" style="top:892.00px;font-size:14.20px;line-height:14.20px;color:#333;left:378.40px;letter-spacing:0.348px;transform:scaleX(1.1000);transform-origin:0.00px 0;">apellido</div>
<div class="t" id="t85" style="top:882.00px;font-size:14.20px;line-height:14.20px;color:#333;left:514.50px;transform:scaleX(1.0350);transform-origin:0.00px 0;">GCB2343</div>
<div class="t" id="t86" style="top:882.00px;font-size:14.20px;line-height:14.20px;color:#333;left:619.50px;transform:scaleX(0.9525);transform-origin:1.00px 0;">11/01/23</div>
<div class="t" id="t87" style="top:882.00px;font-size:14.20px;line-height:14.20px;color:#333;left:703.50px;">1</div>
<div class="t" id="t88" style="top:882.00px;font-size:14.20px;line-height:14.20px;color:#333;left:812.50px;letter-spacing:0.432px;transform:scaleX(1.1000);transform-origin:0.00px 0;">45 km</div>
<div class="t" id="t89" style="top:882.00px;font-size:14.20px;line-height:14.20px;color:#333;left:966.25px;letter-spacing:0.643px;transform:scaleX(1.1000);transform-origin:0.00px 0;">45 min</div>
<div class="t" id="t90" style="top:882.00px;font-size:14.20px;line-height:14.20px;color:#333;left:1095.30px;">2</div>
<div class="t" id="t91" style="top:882.00px;font-size:14.20px;line-height:14.20px;color:#333;left:1200.00px;transform:scaleX(0.8855);transform-origin:1.00px 0;">15%</div>
<div class="t" id="t92" style="top:956.00px;font-size:12.40px;line-height:12.40px;color:#444;left:974.90px;letter-spacing:0.156px;transform:scaleX(1.1000);transform-origin:1.00px 0;">Rows per page:</div>
<div class="t" id="t93" style="top:956.00px;font-size:12.40px;line-height:12.40px;color:#444;left:1106.40px;">5</div>
<div class="t" id="t94" style="top:956.00px;font-size:12.40px;line-height:12.40px;color:#444;left:1173.90px;transform:scaleX(0.9915);transform-origin:0.00px 0;">1-5 of 10</div></div>
</body></html>
